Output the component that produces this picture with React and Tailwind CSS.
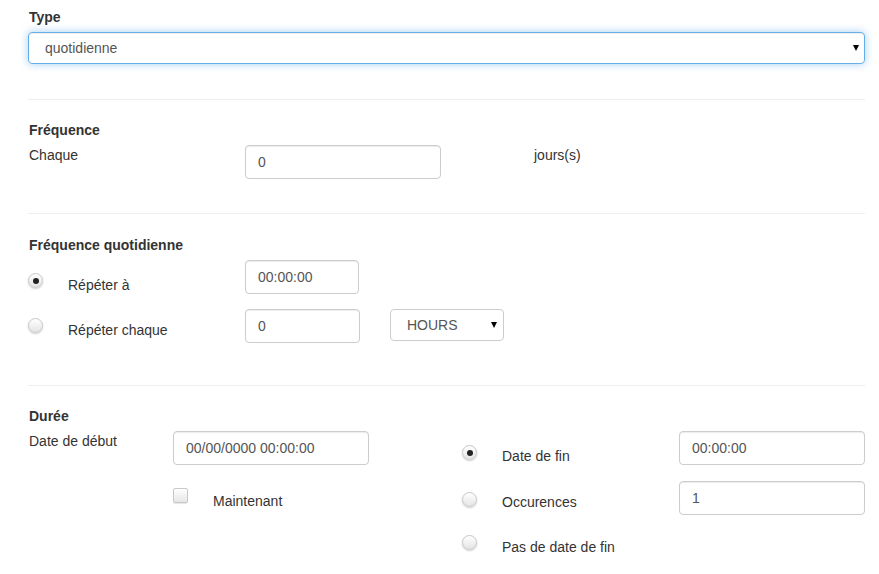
import React from "react";

const inputCls =
  "h-[34px] border border-[#ccc] rounded-[4px] bg-white shadow-[inset_0_1px_1px_rgba(0,0,0,0.075)] pl-[12px] flex items-center text-[#555] text-[14px]";

function Radio({ checked }) {
  return (
    <div className="w-[15px] h-[15px] rounded-full border border-[#c8c8c8] bg-gradient-to-b from-white to-[#e4e4e4] shadow-[0_1px_2px_rgba(0,0,0,0.2)] flex items-center justify-center shrink-0">
      {checked && <div className="w-[6px] h-[6px] rounded-full bg-[#222]" />}
    </div>
  );
}

function Arrow() {
  return (
    <div className="w-0 h-0 border-l-[3.5px] border-r-[3.5px] border-t-[6px] border-l-transparent border-r-transparent border-t-black" />
  );
}

function Hr({ mt }) {
  return <div className={`h-px bg-[#eee] ${mt}`} />;
}

export default function App() {
  return (
    <div
      className="w-[879px] h-[574px] bg-white pl-[28px] pr-[14px] text-[14px] leading-[20px] text-[#333] overflow-hidden"
      style={{ fontFamily: '"Liberation Sans", Arial, sans-serif' }}
    >
      {/* Type */}
      <div className="mt-[7px] font-bold h-[20px] pl-px">Type</div>
      <div className="mt-[5px] h-[32px] border border-[#66afe9] rounded-[4px] shadow-[inset_0_1px_1px_rgba(0,0,0,0.075),0_0_8px_rgba(102,175,233,0.6)] flex items-center pl-[16px] pr-[5px] text-[#555]">
        <span className="flex-1">quotidienne</span>
        <Arrow />
      </div>

      <Hr mt="mt-[35px]" />

      {/* Fréquence */}
      <div className="mt-[20px] font-bold h-[20px] pl-px">Fréquence</div>
      <div className="mt-[5px] flex items-start">
        <div className="w-[217px] pl-px">Chaque</div>
        <div className={`${inputCls} w-[196px]`}>0</div>
        <div className="ml-[93px]">jours(s)</div>
      </div>

      <Hr mt="mt-[34px]" />

      {/* Fréquence quotidienne */}
      <div className="mt-[21px] font-bold h-[20px] pl-px">Fréquence quotidienne</div>
      <div className="mt-[5px] flex items-start">
        <div className="mt-[13px]">
          <Radio checked />
        </div>
        <div className="mt-[15px] ml-[25px] w-[177px]">Répéter à</div>
        <div className={`${inputCls} w-[114px]`}>00:00:00</div>
      </div>
      <div className="mt-[14px] flex items-start">
        <div className="mt-[9px]">
          <Radio />
        </div>
        <div className="mt-[11px] ml-[25px] w-[177px]">Répéter chaque</div>
        <div className={`${inputCls} w-[115px]`}>0</div>
        <div className="ml-[30px] w-[114px] h-[32px] border border-[#ccc] rounded-[4px] bg-white flex items-center pl-[16px] pr-[6px] text-[#555]">
          <span className="flex-1">HOURS</span>
          <Arrow />
        </div>
      </div>

      <Hr mt="mt-[42px]" />

      {/* Durée */}
      <div className="mt-[20px] font-bold h-[20px] pl-px">Durée</div>
      <div className="mt-[5px] flex items-start">
        {/* left half */}
        <div className="w-[434px] shrink-0">
          <div className="flex items-start">
            <div className="w-[145px] pl-px">Date de début</div>
            <div className={`${inputCls} w-[196px]`}>00/00/0000 00:00:00</div>
          </div>
          <div className="flex items-start mt-[23px] pl-[145px]">
            <div className="w-[15px] h-[15px] rounded-[2px] border border-[#c8c8c8] bg-gradient-to-b from-white to-[#e6e6e6] shadow-[0_1px_1px_rgba(0,0,0,0.1)]" />
            <div className="ml-[25px] mt-[3px]">Maintenant</div>
          </div>
        </div>
        {/* right half */}
        <div className="flex-1">
          <div className="flex items-start">
            <div className="mt-[14px]">
              <Radio checked />
            </div>
            <div className="mt-[15px] ml-[25px] w-[177px]">Date de fin</div>
            <div className={`${inputCls} flex-1`}>00:00:00</div>
          </div>
          <div className="flex items-start mt-[15px]">
            <div className="mt-[11px]">
              <Radio />
            </div>
            <div className="mt-[11px] ml-[25px] w-[177px]">Occurences</div>
            <div className={`${inputCls} flex-1`}>1</div>
          </div>
          <div className="flex items-start mt-[20px]">
            <div>
              <Radio />
            </div>
            <div className="mt-[2px] ml-[25px]">Pas de date de fin</div>
          </div>
        </div>
      </div>
    </div>
  );
}
